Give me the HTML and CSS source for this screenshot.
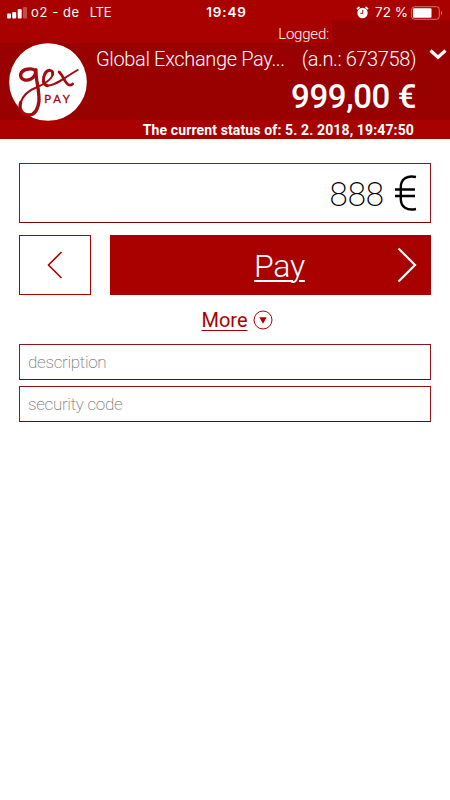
FILE: index.html
```
<!DOCTYPE html>
<html lang="en">
  <head>
    <meta charset="UTF-8" />
    <meta name="viewport" content="width=device-width, initial-scale=1.0" />
    <title>GEX Pay</title>
    <link rel="stylesheet" href="styles.css">
  </head>
  <body>
    <div class="status">
      <div class="status__left">
        <svg class="signal" width="20" height="12" viewBox="0 0 20 12" fill="#fff">
          <rect x="0" y="6.5" width="4" height="5" rx="1" />
          <rect x="5.2" y="5" width="4" height="6.5" rx="1" />
          <rect x="10.7" y="2" width="4" height="9.5" rx="1" />
          <rect x="16" y="0" width="4" height="11.5" rx="1" opacity=".3" />
        </svg>
        <span class="carrier">o2 - de</span>
        <span class="network">LTE</span>
      </div>
      <div class="status__time">19:49</div>
      <div class="status__right">
        <svg width="13" height="13" viewBox="0 0 13 13">
          <circle cx="6.5" cy="7" r="5.2" fill="#fff" />
          <path d="M1 3.2L3.5 1M12 3.2L9.5 1" stroke="#fff" stroke-width="1.7" />
          <path d="M6.8 4v3.3H4.3" fill="none" stroke="#a90000" />
        </svg>
        <span class="percent">72 %</span>
        <svg class="battery" width="32" height="14" viewBox="0 0 32 14">
          <rect x=".7" y=".7" width="27.6" height="12.6" rx="3" fill="none" stroke="#fff" stroke-opacity=".45" />
          <rect x="2" y="2.2" width="18.5" height="9.6" rx="1" fill="#fff" />
          <path d="M30 4.5q2 2.5 0 5z" fill="#fff" opacity=".5" />
        </svg>
      </div>
    </div>
    <div class="logged">
      <span class="logged__label">Logged:</span>
      <span class="logged__user"></span>
    </div>
    <div class="account">
      <svg class="logo" width="78" height="78" viewBox="27 38 234 234">
        <circle cx="144" cy="155" r="116.5" fill="#fff" />
        <g fill="none" stroke="#a30b10" stroke-linecap="round" stroke-linejoin="round">
          <path stroke-width="10" d="M106 121C95 112 66 115 62 132C60 147 77 153 91 147C103 141 108 130 108 118C106 148 118 172 117 212C114 236 104 254 86 254C66 253 56 237 62 216" />
          <path stroke-width="6" d="M62 216C69 196 88 179 112 170C132 162 155 147 158 132" />
          <path stroke-width="9" d="M158 132C160 116 142 117 135 130C127 146 128 163 142 166" />
          <path stroke-width="6" d="M142 166C168 166 190 143 233 119" />
          <path stroke-width="8" d="M177 125C187 131 193 155 204 162C209 165 214 165 218 161" />
        </g>
        <text class="logo__pay" x="133" y="219">PAY</text>
      </svg>
      <div class="account__info">
        <div class="account__name">
          <span class="company">Global Exchange Pay...</span>
          <span class="number">(a.n.: 673758)</span>
        </div>
        <div class="balance">999,00 €</div>
      </div>
      <svg class="chevron" width="18" height="11" viewBox="0 0 18 11">
        <path d="M1.5 1.5L9 8.3L16.5 1.5" fill="none" stroke="#fff" stroke-width="3.2" />
      </svg>
    </div>
    <div class="updated">The current status of: 5. 2. 2018, 19:47:50</div>

    <div class="content">
      <div class="amount">
        <span class="amount__value">888</span>
        <svg width="22" height="36" viewBox="0 0 22 36">
          <path d="M21 2C12 0 5.8 4 5.8 12v12c0 8 6.2 12 15.2 10M0 14.5h20M0 21h20" fill="none" stroke="#000" stroke-width="2.4" />
        </svg>
      </div>
      <div class="buttons">
        <a class="back">
          <svg width="16" height="28" viewBox="0 0 16 28">
            <path d="M14.5 1L1.5 14l13 13" fill="none" stroke="#a90000" stroke-width="1.6" />
          </svg>
        </a>
        <a class="pay">
          <span class="pay__label">Pay</span>
          <svg class="pay__arrow" width="20" height="36" viewBox="0 0 20 36">
            <path d="M1.5 1.5L18 18L1.5 34.5" fill="none" stroke="#fff" stroke-width="2.2" />
          </svg>
        </a>
      </div>
      <div class="more">
        <a class="more__label">More</a>
        <svg width="20" height="20" viewBox="0 0 20 20">
          <circle cx="10" cy="10" r="9" fill="none" stroke="#a90000" />
          <path d="M6.3 7.3h7.4L10 13.7z" fill="#a90000" />
        </svg>
      </div>
      <input class="field" type="text" placeholder="description" />
      <input class="field" type="text" placeholder="security code" />
    </div>
  </body>
</html>
```

FILE: styles.css
```
* {
  box-sizing: border-box;
}
body {
  margin: 0;
  background: #fff;
  font-family: Roboto, "Liberation Sans", sans-serif;
}
svg {
  flex: none;
}

.status {
  display: grid;
  grid-template-columns: 1fr 60px 1fr;
  align-items: center;
  height: 20px;
  padding: 5px 7px 0;
  background: #a90000;
  color: #fff;
  font-family: Inter, sans-serif;
  font-size: 13px;
  line-height: 15px;
  white-space: nowrap;
}
.status__left,
.status__right {
  display: flex;
  align-items: center;
}
.carrier {
  margin-left: 4px;
  letter-spacing: 0.6px;
}
.network {
  margin-left: 10px;
  letter-spacing: -0.3px;
}
.status__time {
  padding-left: 3px;
  text-align: center;
  font-size: 13.5px;
  font-weight: 600;
  letter-spacing: 0.8px;
}
.status__right {
  justify-content: flex-end;
}
.percent {
  margin: 0 3px 0 6px;
  font-size: 13.5px;
}

.logged {
  display: flex;
  height: 23px;
  background: #a90000;
}
.logged__label {
  width: 332px;
  padding-right: 3px;
  color: #fff;
  font-size: 15px;
  font-weight: 300;
  line-height: 29px;
  letter-spacing: -0.2px;
  text-align: right;
}
.logged__user {
  flex: 1;
  background: #990000;
}

.account {
  display: flex;
  height: 77px;
  padding-left: 9px;
  background: #990000;
  color: #fff;
}
.account__info {
  width: 320px;
  margin-left: 9px;
}
.account__name {
  display: flex;
  justify-content: space-between;
  padding-top: 5px;
  font-size: 20px;
  font-weight: 300;
  line-height: 23px;
  white-space: nowrap;
}
.company {
  letter-spacing: -0.35px;
}
.number {
  letter-spacing: -0.4px;
}
.balance {
  padding-top: 8px;
  font-size: 33px;
  font-weight: 500;
  line-height: 36px;
  letter-spacing: -0.4px;
  text-align: right;
}
.chevron {
  margin: 6px 0 0 13px;
}
.logo__pay {
  fill: #a30b10;
  stroke: #a30b10;
  stroke-width: 1px;
  font-family: Lato, sans-serif;
  font-size: 34px;
  letter-spacing: 8px;
}

.updated {
  height: 19px;
  padding-right: 36px;
  background: #a90000;
  color: #fff;
  font-size: 14px;
  font-weight: 700;
  line-height: 20px;
  letter-spacing: 0.13px;
  text-align: right;
}

.content {
  padding: 24px 19px 0;
}
.amount {
  display: flex;
  justify-content: flex-end;
  align-items: center;
  height: 60px;
  padding-right: 13px;
  border: 1px solid #93151a;
  border-bottom-color: #7d0000;
}
.amount__value {
  margin-right: 11px;
  padding-top: 2px;
  font-size: 33px;
  font-weight: 200;
}

.buttons {
  display: flex;
  gap: 19px;
  height: 60px;
  margin-top: 12px;
}
.back {
  display: flex;
  align-items: center;
  justify-content: center;
  width: 72px;
  border: 1px solid #a90000;
}
.pay {
  display: flex;
  flex: 1;
  align-items: center;
  background: #a90000;
  color: #fff;
}
.pay__label {
  flex: 1;
  padding: 2px 0 0 52px;
  font-size: 32px;
  font-weight: 300;
  letter-spacing: -0.3px;
  text-align: center;
  text-decoration: underline;
  text-decoration-thickness: 2px;
  text-underline-offset: 3px;
}
.pay__arrow {
  margin-right: 14px;
}

.more {
  display: flex;
  align-items: center;
  justify-content: center;
  gap: 5px;
  height: 49px;
  padding-left: 24px;
}
.more__label {
  color: #a90000;
  font-size: 20px;
  text-decoration: underline;
  text-decoration-thickness: 1px;
  text-underline-offset: 3px;
}

.field {
  display: block;
  width: 100%;
  height: 36px;
  margin: 0 0 6px;
  padding: 0 8px;
  border: 1px solid #93151a;
  border-bottom-color: #7d0000;
  border-radius: 0;
  font-family: Roboto, sans-serif;
  font-size: 17px;
  font-weight: 200;
  letter-spacing: -0.3px;
}
.field::placeholder {
  color: #777;
}
```
